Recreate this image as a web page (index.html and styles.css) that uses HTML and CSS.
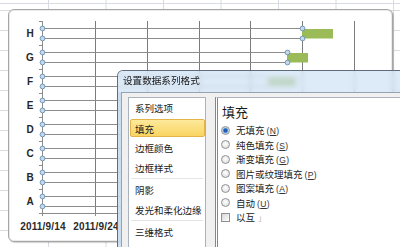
FILE: index.html
```html
<!DOCTYPE html>
<html>
<head>
<meta charset="utf-8">
<link rel="stylesheet" href="styles.css">
</head>
<body>
<div class="chart">
  <svg class="plot" width="383" height="231" viewBox="9 10 383 231" xmlns="http://www.w3.org/2000/svg">
    <g class="grid">
      <line x1="95.5" y1="21" x2="95.5" y2="213"/>
      <line x1="147.5" y1="21" x2="147.5" y2="213"/>
      <line x1="199.5" y1="21" x2="199.5" y2="213"/>
      <line x1="250.5" y1="21" x2="250.5" y2="213"/>
      <line x1="302.5" y1="21" x2="302.5" y2="213"/>
      <line x1="354.5" y1="21" x2="354.5" y2="213"/>
    </g>
    <g class="axis">
      <line x1="42.5" y1="21" x2="42.5" y2="216"/>
      <line x1="39" y1="213.5" x2="380" y2="213.5"/>
      <line x1="39" y1="21.5" x2="42" y2="21.5"/>
      <line x1="39" y1="45.5" x2="42" y2="45.5"/>
      <line x1="39" y1="69.5" x2="42" y2="69.5"/>
      <line x1="39" y1="93.5" x2="42" y2="93.5"/>
      <line x1="39" y1="117.5" x2="42" y2="117.5"/>
      <line x1="39" y1="141.5" x2="42" y2="141.5"/>
      <line x1="39" y1="165.5" x2="42" y2="165.5"/>
      <line x1="39" y1="189.5" x2="42" y2="189.5"/>
      <line x1="95.5" y1="213" x2="95.5" y2="216"/>
      <line x1="147.5" y1="213" x2="147.5" y2="216"/>
    </g>
    <g class="series">
      <line x1="42" y1="28.5" x2="302" y2="28.5"/><line x1="42" y1="38.5" x2="302" y2="38.5"/>
      <line x1="42" y1="52.5" x2="287" y2="52.5"/><line x1="42" y1="62.5" x2="287" y2="62.5"/>
      <line x1="42" y1="76.5" x2="268" y2="76.5"/><line x1="42" y1="86.5" x2="268" y2="86.5"/>
      <line x1="42" y1="100.5" x2="255" y2="100.5"/><line x1="42" y1="110.5" x2="255" y2="110.5"/>
      <line x1="42" y1="124.5" x2="240" y2="124.5"/><line x1="42" y1="134.5" x2="240" y2="134.5"/>
      <line x1="42" y1="148.5" x2="230" y2="148.5"/><line x1="42" y1="158.5" x2="230" y2="158.5"/>
      <line x1="42" y1="172.5" x2="220" y2="172.5"/><line x1="42" y1="182.5" x2="220" y2="182.5"/>
      <line x1="42" y1="196.5" x2="205" y2="196.5"/><line x1="42" y1="206.5" x2="205" y2="206.5"/>
    </g>
    <g class="bars">
      <rect x="302" y="29" width="31" height="9.5"/>
      <rect x="287" y="53" width="21" height="9.5"/>
      <rect x="268" y="77" width="28" height="9.5"/>
    </g>
    <g class="handles">
      <circle cx="42.5" cy="28.5" r="2.4"/><circle cx="42.5" cy="38.5" r="2.4"/>
      <circle cx="42.5" cy="52.5" r="2.4"/><circle cx="42.5" cy="62.5" r="2.4"/>
      <circle cx="42.5" cy="76.5" r="2.4"/><circle cx="42.5" cy="86.5" r="2.4"/>
      <circle cx="42.5" cy="100.5" r="2.4"/><circle cx="42.5" cy="110.5" r="2.4"/>
      <circle cx="42.5" cy="124.5" r="2.4"/><circle cx="42.5" cy="134.5" r="2.4"/>
      <circle cx="42.5" cy="148.5" r="2.4"/><circle cx="42.5" cy="158.5" r="2.4"/>
      <circle cx="42.5" cy="172.5" r="2.4"/><circle cx="42.5" cy="182.5" r="2.4"/>
      <circle cx="42.5" cy="196.5" r="2.4"/><circle cx="42.5" cy="206.5" r="2.4"/>
      <circle cx="302.5" cy="28.5" r="2.4"/><circle cx="302.5" cy="38.5" r="2.4"/>
      <circle cx="287.5" cy="52.5" r="2.4"/><circle cx="287.5" cy="62.5" r="2.4"/>
    </g>
    <g class="cat">
      <text x="30" y="37">H</text>
      <text x="30" y="61">G</text>
      <text x="30" y="85">F</text>
      <text x="30" y="109">E</text>
      <text x="30" y="133">D</text>
      <text x="30" y="157">C</text>
      <text x="30" y="181">B</text>
      <text x="30" y="205">A</text>
    </g>
    <g class="dates">
      <text x="43" y="229.5">2011/9/14</text>
      <text x="96" y="229.5">2011/9/24</text>
    </g>
  </svg>
</div>

<div class="dialog">
  <div class="titlebar">设置数据系列格式</div>
  <div class="frame">
    <div class="client">
      <div class="navlist">
        <div class="nav">系列选项</div>
        <div class="nav selected">填充</div>
        <div class="nav">边框颜色</div>
        <div class="nav">边框样式</div>
        <div class="sep"></div>
        <div class="nav">阴影</div>
        <div class="nav">发光和柔化边缘</div>
        <div class="sep"></div>
        <div class="nav">三维格式</div>
      </div>
      <div class="panel">
        <div class="heading">填充</div>
        <div class="opts">
          <div class="opt"><span class="radio on"></span><span>无填充<span class="key">(<u>N</u>)</span></span></div>
          <div class="opt"><span class="radio"></span><span>纯色填充<span class="key">(<u>S</u>)</span></span></div>
          <div class="opt"><span class="radio"></span><span>渐变填充<span class="key">(<u>G</u>)</span></span></div>
          <div class="opt"><span class="radio"></span><span>图片或纹理填充<span class="key">(<u>P</u>)</span></span></div>
          <div class="opt"><span class="radio"></span><span>图案填充<span class="key">(<u>A</u>)</span></span></div>
          <div class="opt"><span class="radio"></span><span>自动<span class="key">(<u>U</u>)</span></span></div>
          <div class="opt"><span class="check"></span><span>以互<span class="ghost">」</span></span></div>
        </div>
      </div>
    </div>
  </div>
</div>
</body>
</html>
```

FILE: styles.css
```css
html, body {
  margin: 0;
}

body {
  position: relative;
  width: 400px;
  height: 247px;
  box-sizing: border-box;
  padding: 9px 0 0 8px;
  overflow: hidden;
  background-color: #ffffff;
  background-image:
    linear-gradient(90deg, #d8dbdf 1px, transparent 1px),
    linear-gradient(#d8dbdf 1px, transparent 1px),
    linear-gradient(#d8dbdf, #d8dbdf);
  background-size: 57.5px 100%, 100% 20px, 100% 1px;
  background-position: 48px 0, 0 10px, 0 3px;
  background-repeat: repeat, repeat, no-repeat;
  font-family: "Noto Sans CJK SC", "Noto Sans", sans-serif;
}

/* ---------- chart ---------- */
.chart {
  width: 385px;
  height: 233px;
  box-sizing: border-box;
  border: 1px solid #a6a6a6;
  border-radius: 6px;
  background: #ffffff;
  box-shadow: inset 0 0 0 1px #ebebeb, 1px 1px 1px rgba(0, 0, 0, 0.18);
}

.plot {
  display: block;
}

.grid line {
  stroke: #7c7c7c;
  stroke-width: 1;
}

.axis line {
  stroke: #8c8c8c;
  stroke-width: 1;
}

.series line {
  stroke: #8d8d8d;
  stroke-width: 1.2;
}

.bars rect {
  fill: #9bbb59;
}

.handles circle {
  fill: #c3d8ea;
  stroke: #5e86a8;
  stroke-width: 0.8;
}

.cat text {
  font-family: "Liberation Sans", Arial, sans-serif;
  font-weight: bold;
  font-size: 10px;
  fill: #262626;
  text-anchor: middle;
}

.dates text {
  font-family: "Liberation Sans", Arial, sans-serif;
  font-weight: bold;
  font-size: 10px;
  letter-spacing: 0.2px;
  fill: #2a2a2a;
  text-anchor: middle;
}

/* ---------- dialog ---------- */
.dialog {
  position: absolute;
  left: 117px;
  top: 70px;
  width: 300px;
  height: 177px;
  border: 1px solid #5f6c7b;
  border-bottom: none;
  border-radius: 6px 6px 0 0;
}

.titlebar {
  height: 21px;
  padding-left: 5px;
  border-radius: 5px 5px 0 0;
  background: rgba(208, 226, 245, 0.72);
  -webkit-backdrop-filter: blur(2.5px);
  backdrop-filter: blur(2.5px);
  font-size: 9.6px;
  line-height: 18px;
  color: #151515;
  white-space: nowrap;
}

.frame {
  height: 156px;
  padding-left: 3px;
  background: rgba(200, 218, 238, 0.9);
}

.client {
  display: flex;
  height: 100%;
  box-sizing: border-box;
  padding: 4px 0 0 6px;
  border-left: 1px solid #96a3b2;
  border-top: 1px solid #96a3b2;
  background: #f0f0f0;
}

.navlist {
  width: 78px;
  flex: none;
  box-sizing: border-box;
  border: 1px solid #aab2bd;
  border-bottom: none;
  background: #ffffff;
  overflow: hidden;
}

.nav {
  height: 20px;
  padding-left: 6px;
  font-size: 9.5px;
  line-height: 20px;
  color: #202020;
  white-space: nowrap;
}

.nav.selected {
  height: 18px;
  margin: 1px 0 1px 1px;
  padding-left: 4px;
  line-height: 18px;
  border: 1px solid #e3b44a;
  border-radius: 2px;
  box-sizing: border-box;
  background: linear-gradient(#fde99b, #f9d461);
}

.sep {
  height: 1px;
  margin: 0 2px 1px;
  background: #e4e4e4;
}

.panel {
  flex: 1;
  margin-left: 9px;
  padding: 5px 0 0 3px;
  border-top: 1px solid #aab2bd;
  border-left: 3px double #808890;
  background: #ffffff;
}

.heading {
  margin-left: 1px;
  font-size: 13px;
  line-height: 17px;
  color: #1a1a1a;
}

.opts {
  margin-top: 3px;
}

.opt {
  display: flex;
  align-items: center;
  gap: 6px;
  height: 14.5px;
  font-size: 9.5px;
  color: #222222;
  white-space: nowrap;
}

.key {
  margin-left: 2px;
  font-family: "Liberation Sans", Arial, sans-serif;
  font-size: 8.5px;
  letter-spacing: 0.4px;
  color: #333333;
}

.radio {
  flex: none;
  width: 9px;
  height: 9px;
  box-sizing: border-box;
  border: 1px solid #8f9194;
  border-radius: 50%;
  background: radial-gradient(circle at 50% 40%, #ffffff, #d9d9d9);
}

.radio.on {
  background: radial-gradient(circle, #1f5fb8 0 1.6px, #6f9ed8 2.3px, #e4ecf5 3.4px);
}

.check {
  flex: none;
  width: 9px;
  height: 9px;
  box-sizing: border-box;
  border: 1px solid #8f9194;
  background: linear-gradient(135deg, #d6d6d6, #ffffff);
}

.ghost {
  margin-left: 3px;
  color: #b8b8b8;
  font-size: 8px;
}
```
